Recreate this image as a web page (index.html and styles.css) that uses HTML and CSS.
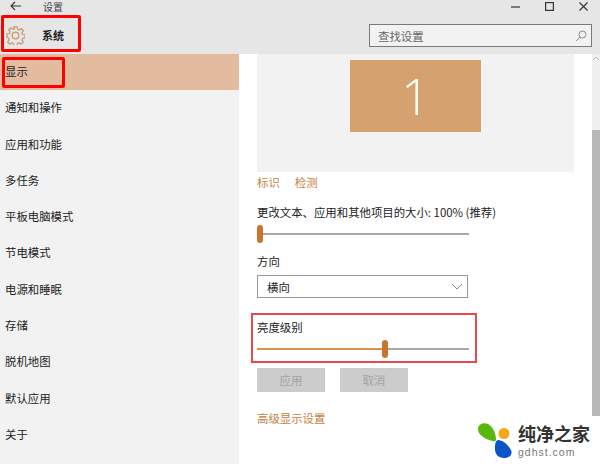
FILE: index.html
```html
<!DOCTYPE html>
<html>
  <head>
    <meta charset="utf-8" />
    <title>设置</title>
    <link rel="stylesheet" href="styles.css">
  </head>

  <body>
    <div class="window">
      <div class="titlebar">
        <div class="title-left">
          <svg class="back" width="11" height="10" viewBox="0 0 11 10"><path d="M11 5H1M5 1 1 5l4 4" fill="none" stroke="#333" stroke-width="1.100"/></svg>
          <span>设置</span>
        </div>
        <div class="controls">
          <svg width="9" height="9" viewBox="0 0 9 9"><path d="M0 5h9" stroke="#333" stroke-width="1.200"/></svg>
          <svg width="9" height="9" viewBox="0 0 9 9"><rect x=".6" y=".6" width="7.800" height="7.800" fill="none" stroke="#333" stroke-width="1.200"/></svg>
          <svg width="9" height="9" viewBox="0 0 9 9"><path d="M.5.500l8 8M8.500.500l-8 8" stroke="#333" stroke-width="1.100"/></svg>
        </div>
      </div>

      <div class="header">
        <div class="section-name">
          <svg width="19" height="19" viewBox="0 0 20 20"><g fill="none" stroke="#cf9767" stroke-width="1.300"><circle cx="10" cy="10" r="3.500"/><path d="M8.300 1h3.400l.5 2.600 1.700.7 2.200-1.500 2.100 2.300-1.500 2.200.7 1.700 2.600.4v3.200l-2.600.5-.7 1.700 1.500 2.200-2.300 2.100-2.200-1.500-1.700.7-.4 2.600H8.300l-.5-2.600-1.700-.7-2.200 1.500-2.100-2.300 1.500-2.200-.7-1.700L1 11.600V8.400l2.600-.5.700-1.700-1.500-2.200 2.300-2.100 2.200 1.500 1.700-.7z"/></g></svg>
          <b>系统</b>
        </div>
        <div class="search">
          <span>查找设置</span>
          <svg width="12" height="12" viewBox="0 0 12 12"><g fill="none" stroke="#8a8a8a"><circle cx="7.500" cy="4.500" r="3.500"/><path d="M5 7 1 11"/></g></svg>
        </div>
      </div>

      <div class="body">
        <ul class="nav">
          <li class="active">显示</li>
          <li>通知和操作</li>
          <li>应用和功能</li>
          <li>多任务</li>
          <li>平板电脑模式</li>
          <li>节电模式</li>
          <li>电源和睡眠</li>
          <li>存储</li>
          <li>脱机地图</li>
          <li>默认应用</li>
          <li>关于</li>
        </ul>

        <div class="main">
          <div class="preview">
            <div class="monitor">1</div>
          </div>
          <div class="links">
            <a>标识</a>
            <a>检测</a>
          </div>

          <div class="label scale-label">更改文本、应用和其他项目的大小: 100% (推荐)</div>
          <div class="slider">
            <div class="thumb"></div>
            <div class="track"></div>
          </div>

          <div class="label dir-label">方向</div>
          <div class="select">
            <span>横向</span>
            <svg width="12" height="7" viewBox="0 0 12 7"><path d="M1 1l5 5 5-5" fill="none" stroke="#888" stroke-width="1"/></svg>
          </div>

          <div class="label bright-label">亮度级别</div>
          <div class="slider">
            <div class="track filled"></div>
            <div class="thumb"></div>
            <div class="track"></div>
          </div>

          <div class="buttons">
            <button>应用</button>
            <button>取消</button>
          </div>

          <a class="advanced">高级显示设置</a>
        </div>

        <div class="scrollbar">
          <div class="scroll-track">
            <svg width="8" height="5" viewBox="0 0 8 5"><path d="M1 4l3-3 3 3" fill="none" stroke="#bbb"/></svg>
          </div>
          <div class="scroll-thumb"></div>
        </div>
      </div>
    </div>

    <div class="mark mark-system"></div>
    <div class="mark mark-display"></div>
    <div class="mark mark-bright"></div>

    <div class="logo">
      <svg width="34" height="36" viewBox="0 0 34 36">
        <path d="M0 6C0 1 6-1 10 1c5 3 8 9 8 16 0 1-2 2-3 1C7 16 0 12 0 6z" fill="#58b80e"/>
        <circle cx="26" cy="10.500" r="5.500" fill="#f5a81c"/>
        <path d="M20 17c5 0 10 5 13 10 2 5-2 8-7 8-6 0-9-4-9-9 0-4 0-8 3-9z" fill="#0a56c8"/>
      </svg>
      <div class="logo-text">
        <div class="logo-name">纯净之家</div>
        <div class="logo-url">gdhst.com</div>
      </div>
    </div>
  </body>
</html>
```

FILE: styles.css
```css
* {
  box-sizing: border-box;
}

html,
body {
  margin: 0;
  padding: 0;
}

body {
  width: 600px;
  height: 464px;
  overflow: hidden;
  font-family: "Noto Sans CJK SC", "Liberation Sans", sans-serif;
  font-size: 11.4px;
  color: #222;
  position: relative;
}

.window {
  display: flex;
  flex-direction: column;
  height: 464px;
}

.titlebar {
  height: 16px;
  padding-bottom: 4px;
  background: #e6e6e6;
  display: flex;
  justify-content: space-between;
  align-items: center;
  flex-shrink: 0;
}

.title-left {
  display: flex;
  align-items: center;
  gap: 22px;
  padding-left: 10px;
  font-family: "Liberation Sans", "Noto Sans CJK SC", sans-serif;
  font-size: 10px;
  color: #444;
}

.controls {
  display: flex;
  align-items: center;
  gap: 25px;
  padding-right: 12px;
}

.header {
  height: 38px;
  background: #e6e6e6;
  display: flex;
  justify-content: space-between;
  align-items: center;
  padding: 0 8px 0 6px;
  flex-shrink: 0;
}

.section-name {
  display: flex;
  align-items: center;
  gap: 17px;
  font-size: 11px;
}

.search {
  width: 223px;
  height: 23px;
  margin-top: 1px;
  border: 1px solid #7a7a7a;
  background: #f2f2f2;
  display: flex;
  justify-content: space-between;
  align-items: center;
  padding: 0 4px 0 8px;
  color: #666;
}

.body {
  flex: 1;
  display: flex;
  min-height: 0;
}

.nav {
  list-style: none;
  margin: 0;
  padding: 0;
  width: 239px;
  background: #f2f2f2;
  flex-shrink: 0;
}

.nav li {
  height: 36.3px;
  line-height: 35px;
  padding-left: 5px;
}

.nav li.active {
  background: #e3bc9f;
}

.main {
  flex: 1;
  background: #fff;
  padding-left: 18px;
  overflow: hidden;
}

.preview {
  width: 317px;
  height: 118px;
  background: #f2f2f2;
  padding-top: 6px;
  display: flex;
  justify-content: center;
  align-items: flex-start;
}

.monitor {
  width: 131px;
  height: 72px;
  background: #d5a16f;
  color: #fff;
  font-family: "Open Sans", "Liberation Sans", sans-serif;
  font-weight: 300;
  font-size: 50px;
  line-height: 72px;
  text-align: center;
}

.links {
  display: flex;
  gap: 15px;
  margin-top: 2px;
  height: 16px;
  line-height: 16px;
}

a {
  color: #c8813f;
}

.label {
  line-height: 16px;
}

.scale-label {
  margin-top: 14px;
}

.slider {
  display: flex;
  align-items: center;
  width: 212px;
  height: 18px;
  margin-top: 5px;
}

.thumb {
  width: 6px;
  height: 18px;
  border-radius: 3px;
  background: #c9762d;
  flex-shrink: 0;
}

.track {
  flex: 1;
  height: 2px;
  background: #a8a8a8;
}

.track.filled {
  flex: 0 0 125px;
  background: #d8914e;
}

.dir-label {
  margin-top: 10px;
}

.select {
  width: 211px;
  height: 23px;
  margin-top: 6px;
  border: 1px solid #999;
  display: flex;
  justify-content: space-between;
  align-items: center;
  padding: 0 4px 0 9px;
}

.bright-label {
  margin-top: 21px;
}

.buttons {
  display: flex;
  gap: 15px;
  margin-top: 10px;
}

.buttons button {
  width: 68px;
  height: 24px;
  border: none;
  background: #ccc;
  font: inherit;
  color: #a3a3a3;
  padding: 0;
}

.advanced {
  display: block;
  margin-top: 18px;
  line-height: 16px;
}

.scrollbar {
  width: 8px;
  background: #fff;
  flex-shrink: 0;
}

.scroll-track {
  height: 76px;
  padding-top: 2px;
  background: #f0f0f0;
}

.scroll-track svg {
  display: block;
}

.scroll-thumb {
  height: 286px;
  background: #b8b8b8;
}

/* red marks drawn on the screenshot */
.mark {
  position: absolute;
  border: 3px solid #f00;
  border-radius: 2px;
}

.mark-system {
  left: 1px;
  top: 15px;
  width: 80px;
  height: 37px;
}

.mark-display {
  left: 2px;
  top: 57px;
  width: 63px;
  height: 31px;
}

.mark-bright {
  left: 251px;
  top: 313px;
  width: 226px;
  height: 50px;
  border: 2px solid #e8474c;
  border-radius: 0;
}

.logo {
  position: absolute;
  left: 478px;
  top: 423px;
  display: flex;
  gap: 6px;
  align-items: center;
}

.logo-name {
  font-family: "Liberation Sans", "Noto Sans CJK SC", sans-serif;
  font-size: 18px;
  font-weight: 700;
  line-height: 21px;
  color: #333;
  white-space: nowrap;
}

.logo-url {
  font-family: "Liberation Sans", sans-serif;
  font-size: 10.500px;
  letter-spacing: 1px;
  line-height: 12px;
  color: #777;
}
```
